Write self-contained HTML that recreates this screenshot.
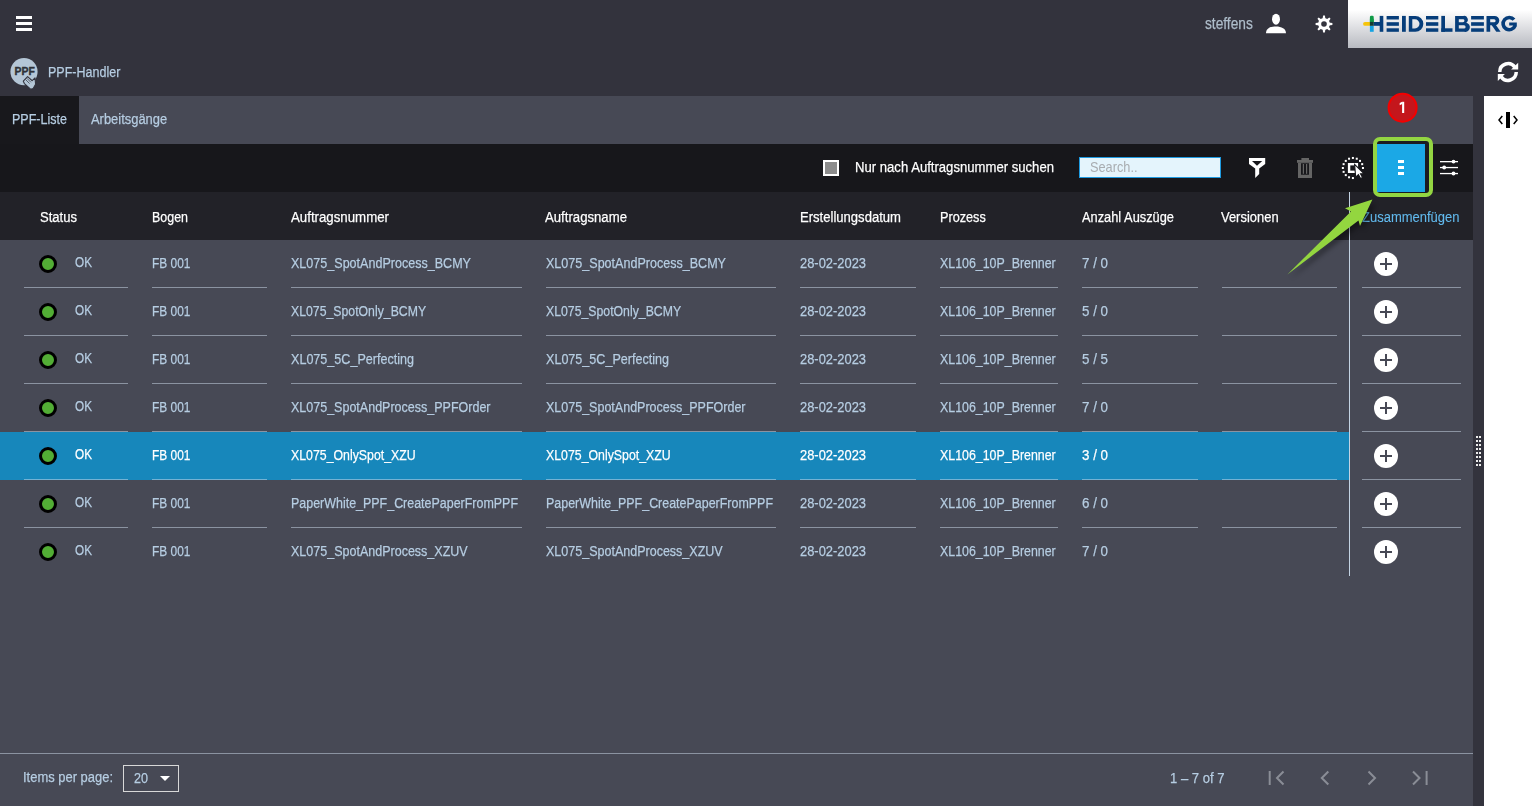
<!DOCTYPE html>
<html><head><meta charset="utf-8">
<style>
html,body{margin:0;padding:0;}
body{width:1532px;height:806px;overflow:hidden;position:relative;background:#33333d;font-family:"Liberation Sans",sans-serif;}
.a{position:absolute;}
.t{position:absolute;white-space:nowrap;line-height:1;transform-origin:0 50%;-webkit-text-stroke:0.25px currentColor;}
.ul{position:absolute;height:1px;background:rgba(207,221,237,0.5);}
</style></head><body>
<!-- header icons -->
<div class="a" style="left:16px;top:16px;width:16px;height:3px;background:#fff"></div>
<div class="a" style="left:16px;top:22px;width:16px;height:3px;background:#fff"></div>
<div class="a" style="left:16px;top:28px;width:16px;height:3px;background:#fff"></div>

<svg class="a" style="left:1264px;top:12px" width="24" height="24" viewBox="0 0 24 24">
  <ellipse cx="12" cy="7.2" rx="4" ry="5.5" fill="#fff"/>
  <path d="M2 21.2 C2 16.5 6.5 14.4 12 14.4 C17.5 14.4 22 16.5 22 21.2 Z" fill="#fff"/>
</svg>
<svg class="a" style="left:1312px;top:12px" width="24" height="24" viewBox="0 0 24 24">
  <g fill="#fff">
    <circle cx="12" cy="12" r="5.9"/>
    <g id="tooth"><path d="M10.5 7.5 L11.1 3.6 H12.9 L13.5 7.5 Z"/></g>
    <use href="#tooth" transform="rotate(45 12 12)"/>
    <use href="#tooth" transform="rotate(90 12 12)"/>
    <use href="#tooth" transform="rotate(135 12 12)"/>
    <use href="#tooth" transform="rotate(180 12 12)"/>
    <use href="#tooth" transform="rotate(225 12 12)"/>
    <use href="#tooth" transform="rotate(270 12 12)"/>
    <use href="#tooth" transform="rotate(315 12 12)"/>
  </g>
  <circle cx="12" cy="12" r="2.8" fill="#33333d"/>
</svg>

<!-- logo -->
<div class="a" style="left:1348px;top:0;width:184px;height:48px;background:linear-gradient(#ffffff 0px,#ffffff 10px,#b8bac1 48px)"></div>
<svg class="a" style="left:1348px;top:0" width="184" height="48" viewBox="1348 0 184 48">
  <g fill="#063d7a">
    <rect x="1373.5" y="22" width="6.5" height="3.8"/>
    <rect x="1379.7" y="15.9" width="3.6" height="15.9"/>
    <rect x="1386.6" y="16" width="12.3" height="3.5"/><rect x="1386.6" y="22.2" width="12.3" height="3.6"/><rect x="1386.6" y="28.3" width="12.3" height="3.5"/>
    <rect x="1402" y="15.9" width="3.8" height="15.9"/>
    <path fill-rule="evenodd" d="M1408.8 15.9 H1415.4 A7.95 7.95 0 0 1 1415.4 31.8 H1408.8 Z M1412.3 19.3 V28.4 H1414.95 A4.55 4.55 0 0 0 1414.95 19.3 Z"/>
    <rect x="1426" y="16" width="12.3" height="3.5"/><rect x="1426" y="22.2" width="12.3" height="3.6"/><rect x="1426" y="28.3" width="12.3" height="3.5"/>
    <rect x="1441.3" y="15.9" width="3.7" height="15.9"/><rect x="1441.3" y="28.3" width="11.2" height="3.5"/>
    <path fill-rule="evenodd" d="M1455.1 15.9 H1463.5 A3.8 3.8 0 0 1 1466.3 22.7 A4.6 4.6 0 0 1 1464.1 31.8 H1455.1 Z M1458.8 19.3 H1463 A1.45 1.45 0 0 1 1463 22.2 H1458.8 Z M1458.8 25.3 H1464 A1.6 1.6 0 0 1 1464 28.5 H1458.8 Z"/>
    <rect x="1471.1" y="16" width="12.8" height="3.5"/><rect x="1471.1" y="22.2" width="12.8" height="3.6"/><rect x="1471.1" y="28.3" width="12.8" height="3.5"/>
    <path fill-rule="evenodd" d="M1486.5 15.9 H1494.6 A4.7 4.7 0 0 1 1494.6 25.3 H1490.2 V31.8 H1486.5 Z M1490.2 19.2 H1494.1 A1.5 1.5 0 0 1 1494.1 22.2 H1490.2 Z"/>
    <path d="M1491.2 24.6 H1495.6 L1500.6 31.8 H1496.3 Z"/>
    <path d="M1509.2 22.4 H1516.8 V26.5 L1513.2 27.2 V25.4 H1509.2 Z"/>
  </g>
  <path d="M1514 19.7 A6.15 6.15 0 1 0 1515 25.8" fill="none" stroke="#063d7a" stroke-width="3.6"/>
  <rect x="1363.1" y="21.9" width="8" height="3.9" rx="1.9" fill="#f6c40a"/>
  <rect x="1369.9" y="15.7" width="3.8" height="7" rx="1.4" fill="#0f9a47"/>
  <rect x="1369.9" y="18.7" width="3.8" height="4" fill="#0f9a47"/>
  <rect x="1369.9" y="25.8" width="3.8" height="6" fill="#14a3e3"/>
  <rect x="1369.9" y="21.9" width="3.8" height="3.9" fill="#143c33"/>
</svg>


<!-- PPF logo -->
<svg class="a" style="left:8px;top:56px" width="34" height="36" viewBox="0 0 34 36">
  <circle cx="16" cy="15.7" r="13.6" fill="#b4c6d6"/>
  <text x="6.5" y="19.3" font-family="Liberation Sans" font-weight="bold" font-size="10.6" fill="#2e3138" stroke="#2e3138" stroke-width="0.35" textLength="20.3" lengthAdjust="spacingAndGlyphs">PPF</text>
  <path d="M15.3 25.2 L19.6 20.6 L24.2 24.6 L27 21.8 L27.6 28.2 L25.2 32.6 L22.6 33.2 L16.4 27.6 Z" fill="#b4c6d6" stroke="#33333d" stroke-width="1.1" stroke-linejoin="round"/>
  <path d="M17.6 23.6 L21.6 27.6 M18.9 22.3 L22.9 26.3 M20.2 21.3 L24 25.1" stroke="#3b3f48" stroke-width="0.75" fill="none"/>
</svg>

<!-- refresh -->
<svg class="a" style="left:1496px;top:60px" width="24" height="24" viewBox="0 0 24 24">
  <g fill="none" stroke="#fff" stroke-width="3.5">
    <path d="M3.75 11.9 A8.3 8.3 0 0 1 18.9 7.3"/>
    <path d="M20.25 12.1 A8.3 8.3 0 0 1 5.1 16.7"/>
  </g>
  <path d="M22.2 2.7 V9.6 H15.1 Z" fill="#fff"/>
  <path d="M1.8 21 V14.1 H8.9 Z" fill="#fff"/>
</svg>

<!-- main panel -->
<div class="a" style="left:0;top:96px;width:1473px;height:710px;background:#474955"></div>
<div class="a" style="left:0;top:96px;width:79px;height:48px;background:#18181c"></div>
<div class="a" style="left:1484px;top:96px;width:48px;height:710px;background:#ffffff"></div>
<svg class="a" style="left:1496px;top:108px" width="24" height="24" viewBox="0 0 24 24">
  <rect x="10" y="4" width="4" height="16" fill="#000"/>
  <path d="M6.3 8 L3 12 L6.3 16" fill="none" stroke="#000" stroke-width="1.5"/>
  <path d="M17.7 8 L21 12 L17.7 16" fill="none" stroke="#000" stroke-width="1.5"/>
</svg>

<div class="a" style="left:1476px;top:436px;width:2px;height:2px;background:#ececec"></div><div class="a" style="left:1479px;top:436px;width:2px;height:2px;background:#ececec"></div><div class="a" style="left:1476px;top:440px;width:2px;height:2px;background:#ececec"></div><div class="a" style="left:1479px;top:440px;width:2px;height:2px;background:#ececec"></div><div class="a" style="left:1476px;top:444px;width:2px;height:2px;background:#ececec"></div><div class="a" style="left:1479px;top:444px;width:2px;height:2px;background:#ececec"></div><div class="a" style="left:1476px;top:448px;width:2px;height:2px;background:#ececec"></div><div class="a" style="left:1479px;top:448px;width:2px;height:2px;background:#ececec"></div><div class="a" style="left:1476px;top:452px;width:2px;height:2px;background:#ececec"></div><div class="a" style="left:1479px;top:452px;width:2px;height:2px;background:#ececec"></div><div class="a" style="left:1476px;top:456px;width:2px;height:2px;background:#ececec"></div><div class="a" style="left:1479px;top:456px;width:2px;height:2px;background:#ececec"></div><div class="a" style="left:1476px;top:460px;width:2px;height:2px;background:#ececec"></div><div class="a" style="left:1479px;top:460px;width:2px;height:2px;background:#ececec"></div><div class="a" style="left:1476px;top:464px;width:2px;height:2px;background:#ececec"></div><div class="a" style="left:1479px;top:464px;width:2px;height:2px;background:#ececec"></div>
<!-- toolbar -->
<div class="a" style="left:0;top:144px;width:1473px;height:48px;background:#17171b"></div>
<div class="a" style="left:823px;top:160px;width:12px;height:12px;border:2px solid #fff;background:#8c8c8c"></div>
<div class="a" style="left:1079px;top:157px;width:140px;height:19px;border:1px solid #1e9ae0;background:#e4f4fc"></div>
<svg class="a" style="left:1248px;top:157px" width="20" height="24" viewBox="0 0 20 24">
  <path fill="#fff" fill-rule="evenodd" d="M1 1 H17.2 V7 L11.2 11.5 V17 L7.2 21 V11.5 L1 7 Z M4 4 H14.2 L9 8.7 Z"/>
</svg>
<svg class="a" style="left:1296px;top:157px" width="20" height="24" viewBox="0 0 20 24">
  <g fill="#656565">
    <rect x="5.4" y="1" width="7.6" height="2.2"/>
    <rect x="1" y="3" width="16" height="2.8"/>
    <path fill-rule="evenodd" d="M2 5.8 H16 V21 H2 Z M5 6.3 V17.8 H13 V6.3 Z"/>
    <rect x="6.8" y="7" width="1.2" height="9.8"/>
    <rect x="10" y="7" width="1.2" height="9.8"/>
  </g>
</svg>
<svg class="a" style="left:1338px;top:152px" width="30" height="30" viewBox="0 0 30 30">
  <g fill="#fff"><rect x="23.95" y="15.00" width="2" height="2"/><rect x="13.90" y="25.05" width="2" height="2"/><rect x="10.05" y="24.28" width="2" height="2"/><rect x="6.79" y="22.11" width="2" height="2"/><rect x="4.62" y="18.85" width="2" height="2"/><rect x="3.85" y="15.00" width="2" height="2"/><rect x="4.62" y="11.15" width="2" height="2"/><rect x="6.79" y="7.89" width="2" height="2"/><rect x="10.05" y="5.72" width="2" height="2"/><rect x="13.90" y="4.95" width="2" height="2"/><rect x="17.75" y="5.72" width="2" height="2"/><rect x="21.01" y="7.89" width="2" height="2"/><rect x="23.18" y="11.15" width="2" height="2"/></g>
  <rect x="11.1" y="12.2" width="7.8" height="7.6" fill="none" stroke="#fff" stroke-width="2.4"/>
  <path d="M16.6 12.4 L17.7 25.2 L20.4 22.6 L22.5 26.6 L24.5 25.6 L22.5 21.8 L26.2 21.8 Z" fill="#fff" stroke="#17171b" stroke-width="1.1" stroke-linejoin="miter"/>
</svg>
<!-- active button -->
<svg class="a" style="left:1438px;top:156px" width="24" height="24" viewBox="0 0 24 24">
  <g fill="#fff">
    <rect x="2" y="5" width="18" height="1.3"/>
    <rect x="2" y="10.9" width="18" height="1.3"/>
    <rect x="2" y="16.9" width="18" height="1.3"/>
    <circle cx="15.5" cy="5.6" r="1.9"/>
    <circle cx="6.2" cy="11.5" r="1.9"/>
    <circle cx="15.5" cy="17.5" r="1.9"/>
  </g>
</svg>

<!-- table header -->
<div class="a" style="left:0;top:192px;width:1473px;height:48px;background:#222228"></div>
<!-- selected row -->
<div class="a" style="left:0;top:432px;width:1349px;height:48px;background:#1787bb"></div>
<div class="a" style="left:39px;top:255px;width:12px;height:12px;border:3px solid #000;border-radius:50%;background:#52ad35"></div>
<div class="a" style="left:1374px;top:252px;width:24px;height:24px;border-radius:50%;background:#fff"></div>
<div class="a" style="left:1380px;top:263px;width:12px;height:2px;background:#474955"></div>
<div class="a" style="left:1385px;top:258px;width:2px;height:12px;background:#474955"></div>
<div class="ul" style="left:24px;top:287px;width:104px"></div>
<div class="ul" style="left:152px;top:287px;width:115px"></div>
<div class="ul" style="left:291px;top:287px;width:231px"></div>
<div class="ul" style="left:546px;top:287px;width:230px"></div>
<div class="ul" style="left:800px;top:287px;width:116px"></div>
<div class="ul" style="left:940px;top:287px;width:118px"></div>
<div class="ul" style="left:1082px;top:287px;width:116px"></div>
<div class="ul" style="left:1222px;top:287px;width:115px"></div>
<div class="ul" style="left:1362px;top:287px;width:99px"></div>
<div class="a" style="left:39px;top:303px;width:12px;height:12px;border:3px solid #000;border-radius:50%;background:#52ad35"></div>
<div class="a" style="left:1374px;top:300px;width:24px;height:24px;border-radius:50%;background:#fff"></div>
<div class="a" style="left:1380px;top:311px;width:12px;height:2px;background:#474955"></div>
<div class="a" style="left:1385px;top:306px;width:2px;height:12px;background:#474955"></div>
<div class="ul" style="left:24px;top:335px;width:104px"></div>
<div class="ul" style="left:152px;top:335px;width:115px"></div>
<div class="ul" style="left:291px;top:335px;width:231px"></div>
<div class="ul" style="left:546px;top:335px;width:230px"></div>
<div class="ul" style="left:800px;top:335px;width:116px"></div>
<div class="ul" style="left:940px;top:335px;width:118px"></div>
<div class="ul" style="left:1082px;top:335px;width:116px"></div>
<div class="ul" style="left:1222px;top:335px;width:115px"></div>
<div class="ul" style="left:1362px;top:335px;width:99px"></div>
<div class="a" style="left:39px;top:351px;width:12px;height:12px;border:3px solid #000;border-radius:50%;background:#52ad35"></div>
<div class="a" style="left:1374px;top:348px;width:24px;height:24px;border-radius:50%;background:#fff"></div>
<div class="a" style="left:1380px;top:359px;width:12px;height:2px;background:#474955"></div>
<div class="a" style="left:1385px;top:354px;width:2px;height:12px;background:#474955"></div>
<div class="ul" style="left:24px;top:383px;width:104px"></div>
<div class="ul" style="left:152px;top:383px;width:115px"></div>
<div class="ul" style="left:291px;top:383px;width:231px"></div>
<div class="ul" style="left:546px;top:383px;width:230px"></div>
<div class="ul" style="left:800px;top:383px;width:116px"></div>
<div class="ul" style="left:940px;top:383px;width:118px"></div>
<div class="ul" style="left:1082px;top:383px;width:116px"></div>
<div class="ul" style="left:1222px;top:383px;width:115px"></div>
<div class="ul" style="left:1362px;top:383px;width:99px"></div>
<div class="a" style="left:39px;top:399px;width:12px;height:12px;border:3px solid #000;border-radius:50%;background:#52ad35"></div>
<div class="a" style="left:1374px;top:396px;width:24px;height:24px;border-radius:50%;background:#fff"></div>
<div class="a" style="left:1380px;top:407px;width:12px;height:2px;background:#474955"></div>
<div class="a" style="left:1385px;top:402px;width:2px;height:12px;background:#474955"></div>
<div class="ul" style="left:24px;top:431px;width:104px"></div>
<div class="ul" style="left:152px;top:431px;width:115px"></div>
<div class="ul" style="left:291px;top:431px;width:231px"></div>
<div class="ul" style="left:546px;top:431px;width:230px"></div>
<div class="ul" style="left:800px;top:431px;width:116px"></div>
<div class="ul" style="left:940px;top:431px;width:118px"></div>
<div class="ul" style="left:1082px;top:431px;width:116px"></div>
<div class="ul" style="left:1222px;top:431px;width:115px"></div>
<div class="ul" style="left:1362px;top:431px;width:99px"></div>
<div class="a" style="left:39px;top:447px;width:12px;height:12px;border:3px solid #000;border-radius:50%;background:#52ad35"></div>
<div class="a" style="left:1374px;top:444px;width:24px;height:24px;border-radius:50%;background:#fff"></div>
<div class="a" style="left:1380px;top:455px;width:12px;height:2px;background:#474955"></div>
<div class="a" style="left:1385px;top:450px;width:2px;height:12px;background:#474955"></div>
<div class="ul" style="left:24px;top:479px;width:104px"></div>
<div class="ul" style="left:152px;top:479px;width:115px"></div>
<div class="ul" style="left:291px;top:479px;width:231px"></div>
<div class="ul" style="left:546px;top:479px;width:230px"></div>
<div class="ul" style="left:800px;top:479px;width:116px"></div>
<div class="ul" style="left:940px;top:479px;width:118px"></div>
<div class="ul" style="left:1082px;top:479px;width:116px"></div>
<div class="ul" style="left:1222px;top:479px;width:115px"></div>
<div class="ul" style="left:1362px;top:479px;width:99px"></div>
<div class="a" style="left:39px;top:495px;width:12px;height:12px;border:3px solid #000;border-radius:50%;background:#52ad35"></div>
<div class="a" style="left:1374px;top:492px;width:24px;height:24px;border-radius:50%;background:#fff"></div>
<div class="a" style="left:1380px;top:503px;width:12px;height:2px;background:#474955"></div>
<div class="a" style="left:1385px;top:498px;width:2px;height:12px;background:#474955"></div>
<div class="ul" style="left:24px;top:527px;width:104px"></div>
<div class="ul" style="left:152px;top:527px;width:115px"></div>
<div class="ul" style="left:291px;top:527px;width:231px"></div>
<div class="ul" style="left:546px;top:527px;width:230px"></div>
<div class="ul" style="left:800px;top:527px;width:116px"></div>
<div class="ul" style="left:940px;top:527px;width:118px"></div>
<div class="ul" style="left:1082px;top:527px;width:116px"></div>
<div class="ul" style="left:1222px;top:527px;width:115px"></div>
<div class="ul" style="left:1362px;top:527px;width:99px"></div>
<div class="a" style="left:39px;top:543px;width:12px;height:12px;border:3px solid #000;border-radius:50%;background:#52ad35"></div>
<div class="a" style="left:1374px;top:540px;width:24px;height:24px;border-radius:50%;background:#fff"></div>
<div class="a" style="left:1380px;top:551px;width:12px;height:2px;background:#474955"></div>
<div class="a" style="left:1385px;top:546px;width:2px;height:12px;background:#474955"></div>
<div class="a" style="left:1349px;top:192px;width:1px;height:384px;background:#c3d3e3"></div>

<!-- footer -->
<div class="a" style="left:0;top:753px;width:1473px;height:1px;background:#8b93a1"></div>
<div class="a" style="left:123px;top:765px;width:54px;height:25px;border:1px solid #d8d8d8"></div>
<svg class="a" style="left:158px;top:774px" width="14" height="9" viewBox="0 0 14 9"><path d="M2 2 H12 L7 7 Z" fill="#fff"/></svg>
<svg class="a" style="left:1264px;top:766px" width="170" height="24" viewBox="0 0 170 24">
  <g fill="none" stroke="#8a8d96" stroke-width="2">
    <path d="M5.7 5 V19"/>
    <path d="M19.5 5.5 L13 12 L19.5 18.5"/>
    <path d="M64.3 5.5 L57.8 12 L64.3 18.5"/>
    <path d="M104.5 5.5 L111 12 L104.5 18.5"/>
    <path d="M149 5.5 L155.5 12 L149 18.5"/>
    <path d="M162.6 5 V19"/>
  </g>
</svg>

<span class="t" style="left:1204.9px;top:16.16px;font-size:16px;color:#aebdca;transform:scaleX(0.8574);">steffens</span>
<span class="t" style="left:47.6px;top:63.78px;font-size:15.5px;color:#b6cde2;transform:scaleX(0.8070);">PPF-Handler</span>
<span class="t" style="left:11.6px;top:111.28px;font-size:15.5px;color:#b6cde2;transform:scaleX(0.8081);">PPF-Liste</span>
<span class="t" style="left:91.2px;top:111.28px;font-size:15.5px;color:#b6cde2;transform:scaleX(0.8342);">Arbeitsgänge</span>
<span class="t" style="left:855.0px;top:159.28px;font-size:15.5px;color:#ffffff;transform:scaleX(0.8461);">Nur nach Auftragsnummer suchen</span>
<span class="t" style="left:1089.8px;top:159.83px;font-size:14.5px;color:#a9adb1;transform:scaleX(0.8796);-webkit-text-stroke:0;">Search..</span>
<span class="t" style="left:39.5px;top:209.28px;font-size:15.5px;color:#ffffff;transform:scaleX(0.8418);">Status</span>
<span class="t" style="left:151.8px;top:209.28px;font-size:15.5px;color:#ffffff;transform:scaleX(0.8031);">Bogen</span>
<span class="t" style="left:290.8px;top:209.28px;font-size:15.5px;color:#ffffff;transform:scaleX(0.8553);">Auftragsnummer</span>
<span class="t" style="left:545.3px;top:209.28px;font-size:15.5px;color:#ffffff;transform:scaleX(0.8497);">Auftragsname</span>
<span class="t" style="left:800.0px;top:209.28px;font-size:15.5px;color:#ffffff;transform:scaleX(0.8433);">Erstellungsdatum</span>
<span class="t" style="left:939.9px;top:209.28px;font-size:15.5px;color:#ffffff;transform:scaleX(0.8179);">Prozess</span>
<span class="t" style="left:1081.6px;top:209.28px;font-size:15.5px;color:#ffffff;transform:scaleX(0.8275);">Anzahl Auszüge</span>
<span class="t" style="left:1221.1px;top:209.28px;font-size:15.5px;color:#ffffff;transform:scaleX(0.8354);">Versionen</span>
<span class="t" style="left:1362.3px;top:209.28px;font-size:15.5px;color:#62baee;transform:scaleX(0.8383);-webkit-text-stroke:0.1px currentColor;">Zusammenfügen</span>
<span class="t" style="left:74.8px;top:254.28px;font-size:15.5px;color:#b6cde2;transform:scaleX(0.7587);">OK</span>
<span class="t" style="left:151.8px;top:255.28px;font-size:15.5px;color:#b6cde2;transform:scaleX(0.7682);">FB 001</span>
<span class="t" style="left:290.8px;top:255.28px;font-size:15.5px;color:#b6cde2;transform:scaleX(0.8097);">XL075_SpotAndProcess_BCMY</span>
<span class="t" style="left:545.6px;top:255.28px;font-size:15.5px;color:#b6cde2;transform:scaleX(0.8097);">XL075_SpotAndProcess_BCMY</span>
<span class="t" style="left:800.0px;top:255.28px;font-size:15.5px;color:#b6cde2;transform:scaleX(0.8323);">28-02-2023</span>
<span class="t" style="left:939.5px;top:255.28px;font-size:15.5px;color:#b6cde2;transform:scaleX(0.7991);">XL106_10P_Brenner</span>
<span class="t" style="left:1081.8px;top:255.28px;font-size:15.5px;color:#b6cde2;transform:scaleX(0.8617);">7 / 0</span>
<span class="t" style="left:74.8px;top:302.28px;font-size:15.5px;color:#b6cde2;transform:scaleX(0.7587);">OK</span>
<span class="t" style="left:151.8px;top:303.28px;font-size:15.5px;color:#b6cde2;transform:scaleX(0.7682);">FB 001</span>
<span class="t" style="left:290.8px;top:303.28px;font-size:15.5px;color:#b6cde2;transform:scaleX(0.7919);">XL075_SpotOnly_BCMY</span>
<span class="t" style="left:545.6px;top:303.28px;font-size:15.5px;color:#b6cde2;transform:scaleX(0.7919);">XL075_SpotOnly_BCMY</span>
<span class="t" style="left:800.0px;top:303.28px;font-size:15.5px;color:#b6cde2;transform:scaleX(0.8323);">28-02-2023</span>
<span class="t" style="left:939.5px;top:303.28px;font-size:15.5px;color:#b6cde2;transform:scaleX(0.7991);">XL106_10P_Brenner</span>
<span class="t" style="left:1081.8px;top:303.28px;font-size:15.5px;color:#b6cde2;transform:scaleX(0.8617);">5 / 0</span>
<span class="t" style="left:74.8px;top:350.28px;font-size:15.5px;color:#b6cde2;transform:scaleX(0.7587);">OK</span>
<span class="t" style="left:151.8px;top:351.28px;font-size:15.5px;color:#b6cde2;transform:scaleX(0.7682);">FB 001</span>
<span class="t" style="left:290.8px;top:351.28px;font-size:15.5px;color:#b6cde2;transform:scaleX(0.8110);">XL075_5C_Perfecting</span>
<span class="t" style="left:545.6px;top:351.28px;font-size:15.5px;color:#b6cde2;transform:scaleX(0.8110);">XL075_5C_Perfecting</span>
<span class="t" style="left:800.0px;top:351.28px;font-size:15.5px;color:#b6cde2;transform:scaleX(0.8323);">28-02-2023</span>
<span class="t" style="left:939.5px;top:351.28px;font-size:15.5px;color:#b6cde2;transform:scaleX(0.7991);">XL106_10P_Brenner</span>
<span class="t" style="left:1081.8px;top:351.28px;font-size:15.5px;color:#b6cde2;transform:scaleX(0.8617);">5 / 5</span>
<span class="t" style="left:74.8px;top:398.28px;font-size:15.5px;color:#b6cde2;transform:scaleX(0.7587);">OK</span>
<span class="t" style="left:151.8px;top:399.28px;font-size:15.5px;color:#b6cde2;transform:scaleX(0.7682);">FB 001</span>
<span class="t" style="left:290.8px;top:399.28px;font-size:15.5px;color:#b6cde2;transform:scaleX(0.8068);">XL075_SpotAndProcess_PPFOrder</span>
<span class="t" style="left:545.6px;top:399.28px;font-size:15.5px;color:#b6cde2;transform:scaleX(0.8068);">XL075_SpotAndProcess_PPFOrder</span>
<span class="t" style="left:800.0px;top:399.28px;font-size:15.5px;color:#b6cde2;transform:scaleX(0.8323);">28-02-2023</span>
<span class="t" style="left:939.5px;top:399.28px;font-size:15.5px;color:#b6cde2;transform:scaleX(0.7991);">XL106_10P_Brenner</span>
<span class="t" style="left:1081.8px;top:399.28px;font-size:15.5px;color:#b6cde2;transform:scaleX(0.8617);">7 / 0</span>
<span class="t" style="left:74.8px;top:446.28px;font-size:15.5px;color:#ffffff;transform:scaleX(0.7587);">OK</span>
<span class="t" style="left:151.8px;top:447.28px;font-size:15.5px;color:#ffffff;transform:scaleX(0.7682);">FB 001</span>
<span class="t" style="left:290.8px;top:447.28px;font-size:15.5px;color:#ffffff;transform:scaleX(0.7951);">XL075_OnlySpot_XZU</span>
<span class="t" style="left:545.6px;top:447.28px;font-size:15.5px;color:#ffffff;transform:scaleX(0.7951);">XL075_OnlySpot_XZU</span>
<span class="t" style="left:800.0px;top:447.28px;font-size:15.5px;color:#ffffff;transform:scaleX(0.8323);">28-02-2023</span>
<span class="t" style="left:939.5px;top:447.28px;font-size:15.5px;color:#ffffff;transform:scaleX(0.7991);">XL106_10P_Brenner</span>
<span class="t" style="left:1081.8px;top:447.28px;font-size:15.5px;color:#ffffff;transform:scaleX(0.8617);">3 / 0</span>
<span class="t" style="left:74.8px;top:494.28px;font-size:15.5px;color:#b6cde2;transform:scaleX(0.7587);">OK</span>
<span class="t" style="left:151.8px;top:495.28px;font-size:15.5px;color:#b6cde2;transform:scaleX(0.7682);">FB 001</span>
<span class="t" style="left:290.8px;top:495.28px;font-size:15.5px;color:#b6cde2;transform:scaleX(0.8034);">PaperWhite_PPF_CreatePaperFromPPF</span>
<span class="t" style="left:545.6px;top:495.28px;font-size:15.5px;color:#b6cde2;transform:scaleX(0.8034);">PaperWhite_PPF_CreatePaperFromPPF</span>
<span class="t" style="left:800.0px;top:495.28px;font-size:15.5px;color:#b6cde2;transform:scaleX(0.8323);">28-02-2023</span>
<span class="t" style="left:939.5px;top:495.28px;font-size:15.5px;color:#b6cde2;transform:scaleX(0.7991);">XL106_10P_Brenner</span>
<span class="t" style="left:1081.8px;top:495.28px;font-size:15.5px;color:#b6cde2;transform:scaleX(0.8617);">6 / 0</span>
<span class="t" style="left:74.8px;top:542.28px;font-size:15.5px;color:#b6cde2;transform:scaleX(0.7587);">OK</span>
<span class="t" style="left:151.8px;top:543.28px;font-size:15.5px;color:#b6cde2;transform:scaleX(0.7682);">FB 001</span>
<span class="t" style="left:290.8px;top:543.28px;font-size:15.5px;color:#b6cde2;transform:scaleX(0.8074);">XL075_SpotAndProcess_XZUV</span>
<span class="t" style="left:545.6px;top:543.28px;font-size:15.5px;color:#b6cde2;transform:scaleX(0.8074);">XL075_SpotAndProcess_XZUV</span>
<span class="t" style="left:800.0px;top:543.28px;font-size:15.5px;color:#b6cde2;transform:scaleX(0.8323);">28-02-2023</span>
<span class="t" style="left:939.5px;top:543.28px;font-size:15.5px;color:#b6cde2;transform:scaleX(0.7991);">XL106_10P_Brenner</span>
<span class="t" style="left:1081.8px;top:543.28px;font-size:15.5px;color:#b6cde2;transform:scaleX(0.8617);">7 / 0</span>
<span class="t" style="left:22.8px;top:769.48px;font-size:15.5px;color:#b6cde2;transform:scaleX(0.8356);">Items per page:</span>
<span class="t" style="left:134.3px;top:769.78px;font-size:15.5px;color:#b6cde2;transform:scaleX(0.8116);">20</span>
<span class="t" style="left:1169.7px;top:769.58px;font-size:15.5px;color:#b6cde2;transform:scaleX(0.8447);">1 – 7 of 7</span>
<!-- annotations -->
<div class="a" style="left:1372.5px;top:137px;width:52.5px;height:52px;border:4px solid #93d542;border-radius:7px;background:#1b1b21"></div>
<div class="a" style="left:1377px;top:144px;width:48px;height:48px;background:#1ba8e6"></div>
<div class="a" style="left:1398px;top:160px;width:6px;height:3px;background:#fff"></div>
<div class="a" style="left:1398px;top:166px;width:6px;height:3px;background:#fff"></div>
<div class="a" style="left:1398px;top:172px;width:6px;height:3px;background:#fff"></div>

<svg class="a" style="left:1270px;top:180px" width="120" height="110" viewBox="1270 180 120 110">
  <defs><filter id="sh" x="-30%" y="-30%" width="160%" height="160%"><feGaussianBlur stdDeviation="2.5"/></filter></defs>
  <path d="M1372.4 199.6 L1360 226 L1358.5 220.5 L1287.4 274.4 L1351 211.5 L1345 208.3 Z" fill="#000" opacity="0.35" filter="url(#sh)" transform="translate(3 4)"/>
  <path d="M1372.4 199.6 L1360 226 L1358.5 220.5 L1287.4 274.4 L1351 211.5 L1345 208.3 Z" fill="#93d63f"/>
</svg>
<svg class="a" style="left:1386px;top:91px" width="34" height="34" viewBox="0 0 34 34">
  <circle cx="16.6" cy="16.7" r="14" fill="#c4161c" stroke="#f40000" stroke-width="2"/>
  <rect x="16.1" y="10.8" width="2.1" height="11.2" fill="#fff"/><path d="M13.7 12.1 L16.2 10.8 V13.1 L13.7 14.2 Z" fill="#fff"/>
</svg>

</body></html>
